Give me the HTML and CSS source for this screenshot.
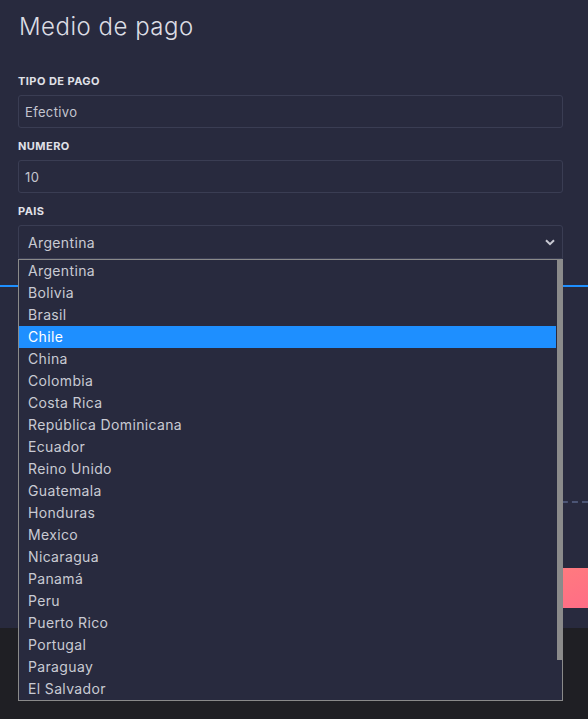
FILE: index.html
```html
<!DOCTYPE html>
<html lang="es">
<head>
<meta charset="utf-8">
<link rel="stylesheet" href="styles.css">
</head>
<body>
<div class="main">
  <div class="form">
    <h1 class="title">Medio de pago</h1>
    <div class="field">
      <label class="label">TIPO DE PAGO</label>
      <div class="input">Efectivo</div>
    </div>
    <div class="field">
      <label class="label">NUMERO</label>
      <div class="input">10</div>
    </div>
    <div class="field">
      <label class="label">PAIS</label>
      <div class="select">
        <span>Argentina</span>
        <svg class="chev" width="10" height="7" viewBox="0 0 10 7"><path d="M1 1.2 L5 5.2 L9 1.2" fill="none" stroke="#c8c9d2" stroke-width="2"/></svg>
      </div>
    </div>
  </div>
  <div class="blue-line"></div>
  <div class="dash-line"></div>
  <div class="btn-row"><div class="btn"></div></div>
</div>
<div class="footer"></div>

<div class="dropdown">
  <ul class="options">
    <li>Argentina</li>
    <li>Bolivia</li>
    <li>Brasil</li>
    <li class="active">Chile</li>
    <li>China</li>
    <li>Colombia</li>
    <li>Costa Rica</li>
    <li>República Dominicana</li>
    <li>Ecuador</li>
    <li>Reino Unido</li>
    <li>Guatemala</li>
    <li>Honduras</li>
    <li>Mexico</li>
    <li>Nicaragua</li>
    <li>Panamá</li>
    <li>Peru</li>
    <li>Puerto Rico</li>
    <li>Portugal</li>
    <li>Paraguay</li>
    <li>El Salvador</li>
  </ul>
  <div class="scrollbar"></div>
</div>
</body>
</html>
```

FILE: styles.css
```css
* { box-sizing: border-box; }
html, body { margin: 0; padding: 0; }
body {
  background: #1f1f24;
  font-family: Inter, "Noto Sans", sans-serif;
  color: #c9cad3;
  width: 588px;
  height: 719px;
  overflow: hidden;
  position: relative;
}
.main {
  background: #282a3e;
  height: 628px;
  display: flex;
  flex-direction: column;
}
.form {
  padding: 0 25px 0 18px;
  display: flex;
  flex-direction: column;
}
.title {
  margin: 11px 0 0 1px;
  font-size: 24px;
  line-height: 32px;
  font-weight: 300;
  color: #dcdde4;
  letter-spacing: 0.5px;
}
.field {
  display: flex;
  flex-direction: column;
}
.field:first-of-type { margin-top: 30px; }
.label {
  font-size: 11px;
  font-weight: 700;
  line-height: 16px;
  color: #e0e1e8;
  margin-bottom: 6px;
  letter-spacing: 0.45px;
}
.field + .field { margin-top: 10px; }
.input {
  height: 33px;
  border: 1px solid #3a3d53;
  border-radius: 3px;
  padding: 0 6px;
  display: flex;
  align-items: center;
  font-size: 13px;
  letter-spacing: 0.35px;
  color: #c4c5cf;
}
.select {
  height: 34px;
  border: 1px solid #3a3d53;
  border-radius: 3px 3px 0 0;
  padding: 0 6px 0 9px;
  display: flex;
  align-items: center;
  justify-content: space-between;
  font-size: 14px;
  letter-spacing: 0.35px;
  color: #c9cad3;
}
.chev { margin-right: 1px; margin-top: 1px; }
.blue-line {
  height: 2px;
  background: #1e8fff;
  margin-top: 26px;
}
.dash-line {
  margin: 214px 0 0 18px;
  border-top: 2px dashed #4c5575;
  height: 0;
}
.btn-row {
  display: flex;
  justify-content: flex-end;
  margin-top: 65px;
}
.btn {
  width: 200px;
  height: 40px;
  background: linear-gradient(160deg, #ff8b76 0%, #ff6d86 100%);
  border-radius: 3px 0 0 3px;
}
.footer {
  height: 91px;
  background: #1f1f24;
}
.dropdown {
  position: absolute;
  left: 18px;
  top: 259px;
  width: 545px;
  height: 442px;
  border: 1px solid #8a8a8a;
  background: #282a3e;
  overflow: hidden;
}
.options {
  list-style: none;
  margin: 0;
  padding: 0;
}
.options li {
  height: 22px;
  line-height: 21px;
  padding-left: 9px;
  font-size: 14px;
  letter-spacing: 0.35px;
  color: #c9cad3;
  margin-right: 6px;
}
.options li.active {
  background: #1e8fff;
  color: #ffffff;
}
.scrollbar {
  position: absolute;
  right: 0;
  top: 0;
  width: 5px;
  height: 400px;
  background: #8b8b8b;
}
```
